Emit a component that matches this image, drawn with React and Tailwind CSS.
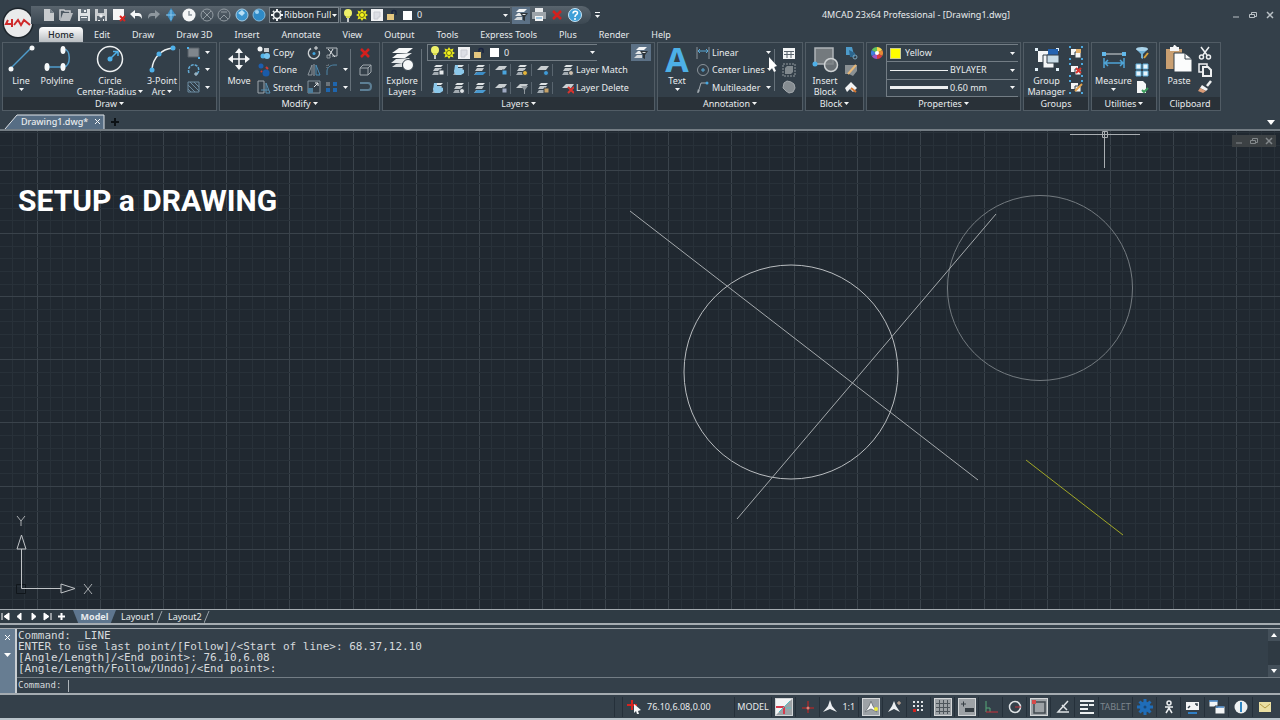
import React, { useState } from 'react';

/* ---------- small helpers ---------- */

const Svg = ({ s = 14, w, h, children, className = '' }) => (
    <svg
        width={w || s}
        height={h || s}
        viewBox={`0 0 ${w || s} ${h || s}`}
        fill="none"
        className={`shrink-0 ${className}`}
        aria-hidden="true"
    >
        {children}
    </svg>
);

const Caret = ({ className = '' }) => (
    <Svg w={5} h={3} className={className}>
        <path d="M0 0H5L2.5 3Z" fill="#f3f5f6" />
    </Svg>
);

const IconButton = ({ label, children, className = '' }) => (
    <button type="button" aria-label={label} className={`flex shrink-0 items-center justify-center ${className}`}>
        {children}
    </button>
);

/* ---------- 14px icons ---------- */

const icons = {
    newFile: (
        <Svg>
            <path d="M2 1H8L12 5V13H2Z" fill="#c9cccf" />
            <path d="M8 1V5H12Z" fill="#77818a" />
        </Svg>
    ),
    open: (
        <Svg>
            <path d="M1 12V2H5L6 3H11V5" stroke="#c9cccf" strokeWidth="1.5" />
            <path d="M1 13L4 5H14L11 13Z" fill="#b9bdc1" />
        </Svg>
    ),
    save: (
        <Svg>
            <path d="M1 1H13V13H1Z" fill="#dfe2e4" />
            <path d="M4 1H10V5H4ZM3 8H11V13H3Z" fill="#66717b" />
            <path d="M7 2H9V4H7ZM4 9H10V10H4Z" fill="#eef0f1" />
        </Svg>
    ),
    saveAs: (
        <Svg>
            <path d="M1 1H13V13H1Z" fill="#c9cdd0" />
            <path d="M4 1H10V5H4ZM3 8H11V13H3Z" fill="#5b6670" />
            <path d="M5 8L7 6L9 8L7 10ZM4 12H6V13H4ZM9 11H10V13H9Z" fill="#eef0f1" />
        </Svg>
    ),
    close: (
        <Svg>
            <path d="M1 1H12V12H1Z" fill="#f6f6f6" />
            <path d="M8 8L13 13M13 8L8 13" stroke="#d8231f" strokeWidth="2" />
        </Svg>
    ),
    undo: (
        <Svg>
            <path d="M1 6L6 2V5H9C12 5 13 7 13 11C12 9 11 8 9 8H6V11Z" fill="#f4f6f7" />
        </Svg>
    ),
    redo: (
        <Svg>
            <path d="M13 6L8 2V5H5C2 5 1 7 1 11C2 9 3 8 5 8H8V11Z" fill="#8e979e" />
        </Svg>
    ),
    pan: (
        <Svg>
            <path d="M7 0L11 6L7 14L3 7Z" fill="#3f8fc4" />
            <path d="M7 2V12M2 7H12" stroke="#89c6ec" />
        </Svg>
    ),
    disc: (
        <Svg>
            <circle cx="7" cy="7" r="6.5" fill="#f4f6f7" />
            <path d="M7 3V7H10" stroke="#8a959d" strokeWidth="1.5" />
        </Svg>
    ),
    orbit: (
        <Svg>
            <circle cx="7" cy="7" r="6" stroke="#929ba2" />
            <path d="M3 3L11 11M11 3L3 11" stroke="#929ba2" />
        </Svg>
    ),
    orbitHalf: (
        <Svg>
            <circle cx="7" cy="7" r="6" stroke="#929ba2" />
            <path d="M3 11L7 7L11 11M4 4H10" stroke="#929ba2" />
        </Svg>
    ),
    globe: (
        <Svg>
            <circle cx="7" cy="7" r="6" fill="#3b94cd" stroke="#a5cbe2" />
            <path d="M3 5L7 2L10 5L7 8Z" fill="#b9e0f6" />
        </Svg>
    ),
    sphere: (
        <Svg>
            <circle cx="7" cy="7" r="6" fill="#2f8ac6" stroke="#7fb6d8" />
            <circle cx="5" cy="4" r="2" fill="#9fd3f2" />
        </Svg>
    ),
    gear: (
        <Svg s={12}>
            <circle cx="6" cy="6" r="3.5" stroke="#f1f3f4" strokeWidth="1.5" />
            <path d="M6 0V2M6 10V12M0 6H2M10 6H12M2 2L3 3M9 9L10 10M2 10L3 9M9 3L10 2" stroke="#f1f3f4" strokeWidth="2" />
        </Svg>
    ),
    bulb: (
        <Svg w={10} h={13}>
            <circle cx="5" cy="4" r="4" fill="#eef06a" />
            <path d="M3 7H7V9H3Z" fill="#d6d84c" />
            <path d="M4 9H6V13H4Z" fill="#c4c8cb" />
        </Svg>
    ),
    sun: (
        <Svg s={12}>
            <path d="M6 0L7.5 2.5L10.5 1.5L9.5 4.5L12 6L9.5 7.5L10.5 10.5L7.5 9.5L6 12L4.5 9.5L1.5 10.5L2.5 7.5L0 6L2.5 4.5L1.5 1.5L4.5 2.5Z" fill="#e8e81c" />
            <circle cx="6" cy="6" r="2.5" fill="#f2f21c" stroke="#6c6d17" />
        </Svg>
    ),
    viewport: (
        <Svg s={12}>
            <path d="M0 0H12V12H0Z" fill="#f0f1f3" />
            <path d="M3 3H9V8H7V10H3Z" fill="#dddfe5" stroke="#c9cbd2" />
        </Svg>
    ),
    lock: (
        <Svg s={12}>
            <path d="M6 6V3C6 1 10 1 10 3V6" stroke="#1b2540" strokeWidth="1.5" />
            <path d="M1 5H8V11H1Z" fill="#e3c67f" />
        </Svg>
    ),
    layerSet: (
        <Svg>
            <path d="M5 1H13L10 4H2Z" fill="#f2f4f5" />
            <path d="M4 5H10L7 8H1Z" fill="#e3e6e8" />
            <path d="M3 9H8V12H0Z" fill="#d3d7da" />
            <path d="M6 5H14L11 9V13L9 12V9Z" fill="#2d3439" />
            <path d="M8 6H12L11 7H9Z" fill="#dfe3e6" />
        </Svg>
    ),
    print: (
        <Svg>
            <path d="M3 0H11V4H3Z" fill="#e8eaec" />
            <path d="M0 4H14V11H0Z" fill="#9da4aa" />
            <path d="M3 8H11V13H3Z" fill="#f4f5f6" />
            <path d="M4 10H10" stroke="#4c97c9" />
        </Svg>
    ),
    cross: (
        <Svg s={12}>
            <path d="M2 2L10 10M10 2L2 10" stroke="#d4201d" strokeWidth="2.5" />
        </Svg>
    ),
    help: (
        <Svg>
            <circle cx="7" cy="7" r="6.5" fill="#3f9fd8" stroke="#c9e4f4" />
            <path d="M5 5.5C5 2.5 9.5 2.5 9.5 5C9.5 7 7 6.5 7 9M7 10V12" stroke="#fff" strokeWidth="1.5" />
        </Svg>
    ),
    rectangle: (
        <Svg>
            <path d="M1 2H12V11H1Z" fill="#7f868c" stroke="#596168" />
            <path d="M0 1H2V3H0ZM11 11H13V13H11Z" fill="#4fb0e8" />
        </Svg>
    ),
    revision: (
        <Svg>
            <path d="M2 10C0 5 4 1 8 2C12 3 13 8 10 11" stroke="#62a9d3" strokeWidth="1.5" strokeDasharray="3 1" />
            <path d="M7 11H11M9 9V13" stroke="#b9d6e6" />
        </Svg>
    ),
    hatch: (
        <Svg>
            <path d="M1 2H12V12H1Z" stroke="#6d8ca1" />
            <path d="M1 5L8 12M1 9L4 12M3 2L12 11M7 2L12 7" stroke="#6d8ca1" />
        </Svg>
    ),
    copy: (
        <Svg>
            <circle cx="3" cy="3" r="2.5" fill="#f4f6f7" />
            <path d="M7 2H12V6H7Z" fill="#c7cbce" />
            <circle cx="6" cy="10" r="2.5" fill="#53b2e6" />
            <circle cx="10" cy="10" r="3" fill="#76c4ee" />
        </Svg>
    ),
    clone: (
        <Svg>
            <circle cx="4" cy="3" r="2.5" fill="#1d5fae" />
            <circle cx="9" cy="10" r="3.5" fill="#1a5ba9" />
            <path d="M9 4L11 6M4 8L5 9" stroke="#d03a34" strokeWidth="2" />
        </Svg>
    ),
    stretch: (
        <Svg>
            <path d="M1 1H7V13H1Z" stroke="#9fa7ad" />
            <path d="M9 3V13H13ZM4 10H12" stroke="#5791b5" />
        </Svg>
    ),
    rotate: (
        <Svg>
            <path d="M4 2.5A5.5 5.5 0 1 0 12 5" stroke="#cdd2d5" strokeWidth="1.5" />
            <path d="M7 2H11M9 0V4" stroke="#dfe3e5" />
            <circle cx="7" cy="7.5" r="1.5" fill="#3fa5e0" />
        </Svg>
    ),
    mirror: (
        <Svg>
            <path d="M5 2V12H1Z" stroke="#8d969d" />
            <path d="M9 2V12H13Z" stroke="#4d8fb8" />
            <path d="M7 1V13" stroke="#9aa3aa" />
        </Svg>
    ),
    scale: (
        <Svg>
            <path d="M1 1H13V13H1Z" stroke="#84929c" />
            <path d="M1 8H6V13H1Z" fill="#4d7d9b" />
            <path d="M7 7L11 3M8 3H11V6" stroke="#e4e7e9" />
        </Svg>
    ),
    trim: (
        <Svg>
            <path d="M1 2H12V10H7" stroke="#b6bdc2" />
            <path d="M3 3L10 11M8 3L4 10" stroke="#e4e7e9" />
            <path d="M2 9H5V12H2Z" stroke="#8d969d" />
        </Svg>
    ),
    fillet: (
        <Svg>
            <path d="M2 12V8C2 5 5 2 9 2H12" stroke="#4e86a8" />
            <path d="M2 5V2H5" stroke="#8d969d" strokeDasharray="1 1" />
        </Svg>
    ),
    array: (
        <Svg>
            <path d="M1 2H5V6H1Z" fill="#6b747b" />
            <path d="M8 2H12V6H8ZM1 8H5V12H1ZM8 8H12V12H8Z" fill="#1f66ae" />
        </Svg>
    ),
    box: (
        <Svg>
            <path d="M1 5H9V12H1ZM4 2H12V9M1 5L4 2M9 5L12 2M9 12L12 9" stroke="#a1a9af" />
        </Svg>
    ),
    join: (
        <Svg>
            <path d="M1 3H9C13 3 13 10 9 10H1" stroke="#5d7f95" strokeWidth="2" />
        </Svg>
    ),
    linear: (
        <Svg>
            <path d="M1 1V13M13 1V13" stroke="#8b949b" />
            <path d="M2 5H12M4 3L2 5L4 7M10 3L12 5L10 7" stroke="#5aa9d6" />
        </Svg>
    ),
    centerLines: (
        <Svg>
            <circle cx="7" cy="7" r="5.5" stroke="#8b949b" />
            <path d="M5 7H9M7 5V9" stroke="#5aa9d6" />
        </Svg>
    ),
    multileader: (
        <Svg>
            <path d="M2 13L5 3H10" stroke="#a3abb1" />
            <circle cx="11" cy="3" r="1.5" fill="#46a8e2" />
            <path d="M1 13L2 9L4 11Z" fill="#a3abb1" />
        </Svg>
    ),
    table: (
        <Svg>
            <path d="M1 2H13V13H1Z" fill="#f3f5f6" />
            <path d="M2 5.5H12M2 8.5H12M5 5V12M9 5V12" stroke="#58636d" />
        </Svg>
    ),
    wipeout: (
        <Svg>
            <path d="M1 1H13V13H1Z" stroke="#929a9f" strokeDasharray="2 1" />
            <path d="M3 5L5 3H11V9L9 11H3Z" fill="#81898e" />
        </Svg>
    ),
    cloud: (
        <Svg>
            <path d="M2 3L5 1L9 2L12 4L13 8L11 12L7 13L4 11L1 8Z" fill="#858c91" stroke="#a3a9ad" />
        </Svg>
    ),
    blockA: (
        <Svg>
            <path d="M2 1H8L10 9H2Z" fill="#4d9bca" />
            <path d="M5 4L11 7V11H6Z" fill="#2c668e" />
            <circle cx="11" cy="11" r="2" stroke="#7ba5bd" />
        </Svg>
    ),
    blockB: (
        <Svg>
            <path d="M1 2H13V8L9 13L5 11H1Z" fill="#8a9093" />
            <path d="M4 11L12 2" stroke="#e7b878" strokeWidth="2" />
        </Svg>
    ),
    blockC: (
        <Svg>
            <path d="M1 8L7 2L13 8L9 12L6 9L3 12Z" fill="#f2f3f4" />
            <path d="M7 8L12 12" stroke="#d57732" strokeWidth="2" />
        </Svg>
    ),
    wheel: (
        <Svg s={12}>
            <path d="M6 6V0A6 6 0 0 1 11.2 3Z" fill="#f7d64a" />
            <path d="M6 6L11.2 3A6 6 0 0 1 11.2 9Z" fill="#e78936" />
            <path d="M6 6L11.2 9A6 6 0 0 1 6 12Z" fill="#dc3a40" />
            <path d="M6 6V12A6 6 0 0 1 .8 9Z" fill="#9f54c4" />
            <path d="M6 6L.8 9A6 6 0 0 1 .8 3Z" fill="#3f7fe0" />
            <path d="M6 6L.8 3A6 6 0 0 1 6 0Z" fill="#63c35c" />
            <circle cx="6" cy="6" r="2" fill="#fff" />
        </Svg>
    ),
    filter: (
        <Svg>
            <path d="M1 3L13 3L8 8V13L6 12V8Z" fill="#6fb1d6" />
            <ellipse cx="7" cy="3" rx="6" ry="2" fill="#a9d3ea" />
            <path d="M9 12L13 7" stroke="#d8a23a" strokeWidth="2" />
        </Svg>
    ),
    tiles: (
        <Svg>
            <path d="M1 1H6V6H1ZM8 1H13V6H8ZM1 8H6V13H1ZM8 8H13V13H8Z" fill="#eaf5fb" stroke="#5fb0dc" />
        </Svg>
    ),
    check: (
        <Svg>
            <path d="M2 1H8L11 4V13H2Z" fill="#f4f5f6" />
            <path d="M7 10L9 12L13 8" stroke="#3c9c5c" strokeWidth="2" />
        </Svg>
    ),
    cut: (
        <Svg>
            <path d="M3 1L9 9M11 1L5 9" stroke="#eef0f1" strokeWidth="1.5" />
            <circle cx="3.5" cy="11" r="2" stroke="#eef0f1" strokeWidth="1.5" />
            <circle cx="10.5" cy="11" r="2" stroke="#eef0f1" strokeWidth="1.5" />
        </Svg>
    ),
    copyClip: (
        <Svg>
            <path d="M4 9H1V1H9V3" stroke="#eef0f1" strokeWidth="1.5" />
            <path d="M5 4H10L13 7V13H5Z" stroke="#eef0f1" strokeWidth="2" />
        </Svg>
    ),
    brush: (
        <Svg>
            <path d="M9 6L13 1" stroke="#eef0f1" strokeWidth="2.5" />
            <path d="M4 5L10 9L8 11L2 8Z" fill="#f3f4f5" />
            <path d="M2 8L8 11L5 13L0 11Z" fill="#d89a76" />
        </Svg>
    ),
};

const layerMarks = {
    square: (c) => <path d="M7 6H12V11H7Z" fill={c} stroke="#333f49" />,
    dot: (c) => <circle cx="9" cy="9" r="2.5" fill={c} stroke="#333f49" />,
    funnel: (c) => <path d="M5 4H12L9 8V12H8V8Z" fill={c} />,
    cross: (c) => <path d="M6 5L12 11M12 5L6 11" stroke={c} strokeWidth="2" />,
    plane: (c) => <path d="M3 8H12L9 11H0Z" fill={c} />,
    person: (c) => <path d="M2 1H5V4H7L11 6V9L8 11H3L1 8Z" fill={c} />,
};

const LayerIcon = ({ color, mark, thin }) => (
    <Svg s={12}>
        {thin ? (
            <path d="M4 2H12L9 6H0Z" fill="#c9ced1" />
        ) : (
            <g>
                <path d="M4 1H11L9 3H2Z" fill="#dfe3e5" />
                <path d="M3 4H10L8 7H1Z" fill="#c2c8cc" />
                <path d="M2 8H9L7 11H0Z" fill="#a3abb1" />
            </g>
        )}
        {layerMarks[mark](color)}
    </Svg>
);

const GroupIcon = ({ mark = 'square' }) => (
    <Svg>
        <path d="M0 0H2V2H0ZM12 0H14V2H12ZM0 12H2V14H0ZM12 12H14V14H12Z" fill="#4da8de" />
        <path d="M2 3H9V9H2Z" fill="#f4f5f6" />
        <path d="M6 6H12V12H6Z" fill="#f4f5f6" stroke="#36424c" />
        {mark === 'square' && <path d="M7 3H12V7H7Z" fill="#e2b06a" />}
        {mark === 'cross' && <path d="M7 5L12 10M12 5L7 10" stroke="#d8342e" strokeWidth="2" />}
        {mark === 'pencil' && <path d="M6 11L13 4" stroke="#e2a24c" strokeWidth="2" />}
    </Svg>
);

/* ---------- ribbon blocks ---------- */

const Panel = ({ title, caret = true, className = '', children }) => (
    <section className={`flex shrink-0 flex-col border border-[#515c65] bg-[#333f49] ${className}`}>
        <div className="flex flex-1 items-stretch">{children}</div>
        <button type="button" className="flex h-[13px] items-center justify-center gap-[2px] bg-[#293138] text-[9px] leading-3">
            {title}
            {caret && <Caret />}
        </button>
    </section>
);

const BigButton = ({ icon, label, label2, caret, caretBelow, className = '' }) => (
    <button type="button" className={`flex shrink-0 flex-col items-center pt-[2px] text-[9px] leading-[11px] ${className}`}>
        <span className="flex h-7 items-center justify-center">{icon}</span>
        <span className="mt-[2px] whitespace-nowrap">{label}</span>
        {label2 && (
            <span className="flex items-center gap-[2px] whitespace-nowrap">
                {label2}
                {caret && <Caret />}
            </span>
        )}
        {caretBelow && <Caret className="mt-[2px]" />}
    </button>
);

const Column = ({ children, className = '' }) => (
    <div className={`flex shrink-0 flex-col justify-around py-[1px] ${className}`}>{children}</div>
);

const Divider = () => <span className="my-[6px] w-px shrink-0 bg-[#66717a]" />;

const SmallButton = ({ icon, label, caret, className = '' }) => (
    <button type="button" className={`flex h-4 items-center gap-[2px] whitespace-nowrap text-[9px] ${className}`}>
        {icon}
        <span>{label}</span>
        {caret && <Caret className="ml-auto" />}
    </button>
);

const IconCaret = ({ label, icon, caret = true }) => (
    <IconButton label={label} className="h-4 w-6 !justify-start gap-[4px]">
        {icon}
        {caret && <Caret />}
    </IconButton>
);

const LayerCombo = ({ label, className = '' }) => (
    <label className={`flex items-center gap-[3px] border border-[#737d85] px-[2px] ${className}`}>
        {icons.bulb}
        {icons.sun}
        {icons.viewport}
        {icons.lock}
        <span className="ml-[2px] size-[9px] shrink-0 bg-white" />
        <select aria-label={label} className="ml-[2px] min-w-0 flex-1 appearance-none bg-transparent text-[9px] leading-3 outline-none">
            <option>0</option>
        </select>
        <Caret />
    </label>
);

const LineIcon = (
    <Svg s={28}>
        <path d="M4 23L24 3" stroke="#4f9ccb" strokeWidth="1.5" />
        <circle cx="4" cy="24" r="2.5" fill="#f6f8f9" />
        <circle cx="25" cy="3" r="2.5" fill="#f6f8f9" />
    </Svg>
);

const PolylineIcon = (
    <Svg s={28}>
        <path d="M6 22H18M21 4C28 5 28 20 21 22" stroke="#4f9ccb" strokeWidth="1.5" />
        <ellipse cx="4" cy="22" rx="2.5" ry="4" fill="#f6f8f9" />
        <ellipse cx="20" cy="22" rx="2.5" ry="4" fill="#f6f8f9" />
        <ellipse cx="20" cy="5" rx="2.5" ry="4" fill="#f6f8f9" />
    </Svg>
);

const CircleIcon = (
    <Svg s={28}>
        <circle cx="14" cy="14" r="12.5" stroke="#eef1f2" strokeWidth="1.5" />
        <path d="M14 14L21 7M17 6.5H22V11" stroke="#4fb0e8" strokeWidth="1.5" />
        <circle cx="14" cy="14" r="2.5" fill="#4fb0e8" />
    </Svg>
);

const ArcIcon = (
    <Svg s={28}>
        <path d="M4 24C5 13 13 4 25 3" stroke="#eef1f2" strokeWidth="1.5" />
        <circle cx="4" cy="25" r="2.5" fill="#4fb0e8" />
        <circle cx="11" cy="9" r="2.5" fill="#4fb0e8" />
        <circle cx="25" cy="3" r="2.5" fill="#4fb0e8" />
    </Svg>
);

const MoveIcon = (
    <Svg s={24}>
        <path d="M12 4V20M4 12H20" stroke="#f6f8f9" strokeWidth="1.5" />
        <path d="M12 1L16 6H8ZM12 23L8 18H16ZM1 12L6 8V16ZM23 12L18 16V8Z" fill="#f6f8f9" />
    </Svg>
);

const ExploreIcon = (
    <Svg s={24}>
        <path d="M9 1H23L17 6H2Z" fill="#f6f8f9" />
        <path d="M7 7L2 11H15L22 6" fill="#f6f8f9" />
        <path d="M6 12L1 16H14L20 11" fill="#e6e9eb" />
        <path d="M6 17L2 20H12V16" fill="#d6dadd" />
        <circle cx="18" cy="18" r="5.5" fill="#f6f8f9" stroke="#333f49" />
    </Svg>
);

const InsertBlockIcon = (
    <Svg s={28}>
        <path d="M4 3H22V19H4Z" fill="#747a7e" stroke="#aeb4b8" strokeWidth="1.5" />
        <circle cx="20" cy="20" r="6.5" fill="#777d81" fillOpacity=".8" stroke="#ced2d4" strokeWidth="1.5" />
        <circle cx="4" cy="19" r="2.5" fill="#4fb0e8" />
    </Svg>
);

const GroupManagerIcon = (
    <Svg s={26}>
        <path d="M1 2H4V5H1ZM22 2H25V5H22ZM1 22H4V25H1ZM22 22H25V25H22Z" fill="#e4f2fa" />
        <path d="M4 5H16V16H4Z" fill="#f4f6f7" />
        <path d="M9 9H20V22H9Z" fill="#f4f6f7" stroke="#333f49" />
        <path d="M14 3H24V10H14Z" fill="#2463b1" />
        <path d="M13 9H25V17H13Z" fill="#c8dbe6" stroke="#333f49" />
    </Svg>
);

const MeasureIcon = (
    <Svg s={24}>
        <path d="M2 7H22" stroke="#d9dee1" />
        <path d="M3 16H21M2 11V21M22 11V21M6 13L3 16L6 19M18 13L21 16L18 19" stroke="#4fa4d6" strokeWidth="1.5" />
        <path d="M0 5H4V9H0ZM20 5H24V9H20Z" fill="#62b8ea" />
    </Svg>
);

const PasteIcon = (
    <Svg s={28}>
        <path d="M1 4H17V24H1Z" fill="#c99f71" />
        <path d="M5 2H8L9 0H10L12 2H14V6H5Z" fill="#f4f5f6" />
        <path d="M9 8H20L27 14V27H9Z" fill="#fbfcfc" stroke="#333f49" />
        <path d="M20 8V14H27" stroke="#333f49" />
    </Svg>
);

const layerTools = [
    [
        { name: 'Layer freeze', color: '#e6e9eb', mark: 'square' },
        { name: 'Layer merge', color: '#8cc8ea', mark: 'person' },
        { name: 'Layer walk', color: '#3c8dc6', mark: 'plane' },
        { name: 'Layer lock', color: '#4aa5de', mark: 'square', thin: true },
        { name: 'Layer on', color: '#e5b53a', mark: 'dot' },
        { name: 'Layer isolate', color: '#3f9bd8', mark: 'dot', thin: true },
    ],
    [
        { name: 'Make current', color: '#8cc8ea', mark: 'person' },
        { name: 'Layer off', color: '#dfe3e6', mark: 'dot' },
        { name: 'Layer thaw', color: '#4a9ad0', mark: 'plane' },
        { name: 'Layer unlock', color: '#9fa9c2', mark: 'square', thin: true },
        { name: 'Layer filter', color: '#8e969c', mark: 'funnel', thin: true },
        { name: 'Layer previous', color: '#c6a268', mark: 'square' },
    ],
];

const LayerRow = ({ tools, label, icon }) => (
    <div className="flex h-[18px] items-center">
        {tools.map((t) => (
            <React.Fragment key={t.name}>
                <IconButton label={t.name} className="w-[21px]">
                    <LayerIcon {...t} />
                </IconButton>
                <span className="-ml-px h-3 w-px shrink-0 bg-[#59656f]" />
            </React.Fragment>
        ))}
        <SmallButton icon={icon} label={label} className="ml-[9px]" />
    </div>
);

const PropertyCombo = ({ label, value, swatch, line }) => (
    <label className="flex flex-1 items-center gap-[2px] border-b border-l border-[#737d85] px-[3px] first:border-t">
        {swatch && <span className="mr-[2px] size-[11px] shrink-0 border border-[#cfcf8f] bg-[#ffff00]" />}
        {line && <span className={`w-[58px] shrink-0 bg-[#eef0f1] ${line}`} />}
        <select aria-label={label} className="min-w-0 flex-1 appearance-none bg-transparent text-[9px] leading-3 outline-none">
            <option>{value}</option>
        </select>
        <Caret />
    </label>
);

const Ribbon = () => (
    <div className="flex h-[69px] gap-[2px] pl-[2px]">
        <Panel title="Draw" className="w-[215px]">
            <BigButton icon={LineIcon} label="Line" caretBelow className="w-9" />
            <BigButton icon={PolylineIcon} label="Polyline" className="w-9" />
            <BigButton icon={CircleIcon} label="Circle" label2="Center-Radius" caret className="w-[70px]" />
            <BigButton icon={ArcIcon} label="3-Point" label2="Arc" caret className="w-[34px]" />
            <Divider />
            <Column className="ml-[7px]">
                <IconCaret label="Rectangle" icon={icons.rectangle} />
                <IconCaret label="Revision cloud" icon={icons.revision} />
                <IconCaret label="Hatch" icon={icons.hatch} />
            </Column>
        </Panel>

        <Panel title="Modify" className="w-[161px]">
            <BigButton icon={MoveIcon} label="Move" className="ml-[1px] w-9" />
            <Column className="w-[50px]">
                <SmallButton icon={icons.copy} label="Copy" />
                <SmallButton icon={icons.clone} label="Clone" />
                <SmallButton icon={icons.stretch} label="Stretch" />
            </Column>
            <Column className="w-[18px]">
                <IconCaret label="Rotate" icon={icons.rotate} caret={false} />
                <IconCaret label="Mirror" icon={icons.mirror} caret={false} />
                <IconCaret label="Scale" icon={icons.scale} caret={false} />
            </Column>
            <Column className="w-[25px]">
                <IconCaret label="Trim" icon={icons.trim} caret={false} />
                <IconCaret label="Fillet" icon={icons.fillet} />
                <IconCaret label="Array" icon={icons.array} />
            </Column>
            <Divider />
            <Column className="ml-2 w-4">
                <IconCaret label="Erase" icon={icons.cross} caret={false} />
                <IconCaret label="Explode" icon={icons.box} caret={false} />
                <IconCaret label="Join" icon={icons.join} caret={false} />
            </Column>
        </Panel>

        <Panel title="Layers" className="w-[273px]">
            <BigButton icon={ExploreIcon} label="Explore" label2="Layers" className="w-[38px]" />
            <Divider />
            <div className="ml-[5px] flex flex-1 flex-col">
                <div className="flex h-[18px] items-start justify-between pr-[3px]">
                    <LayerCombo label="Current layer" className="mt-px h-[17px] w-[170px] border-r-0" />
                    <IconButton label="Layer states" className="mt-px h-[17px] w-5 bg-[#5c7186]">
                        {icons.layerSet}
                    </IconButton>
                </div>
                <LayerRow tools={layerTools[0]} label="Layer Match" icon={<LayerIcon color="#cdbfae" mark="dot" />} />
                <LayerRow tools={layerTools[1]} label="Layer Delete" icon={<LayerIcon color="#d8342e" mark="cross" thin />} />
            </div>
        </Panel>

        <Panel title="Annotation" className="w-[146px]">
            <BigButton
                icon={<span className="font-['Open_Sans',sans-serif] text-[34px] font-bold leading-7 text-[#4db0e6]">A</span>}
                label="Text"
                caretBelow
                className="w-[38px]"
            />
            <Column className="w-[75px]">
                <SmallButton icon={icons.linear} label="Linear" caret />
                <SmallButton icon={icons.centerLines} label="Center Lines" caret />
                <SmallButton icon={icons.multileader} label="Multileader" caret />
            </Column>
            <span className="w-[3px]" />
            <Divider />
            <Column className="ml-[7px] w-[18px]">
                <IconCaret label="Table" icon={icons.table} caret={false} />
                <IconCaret label="Wipeout" icon={icons.wipeout} caret={false} />
                <IconCaret label="Cloud" icon={icons.cloud} caret={false} />
            </Column>
        </Panel>

        <Panel title="Block" className="w-[59px]">
            <BigButton icon={InsertBlockIcon} label="Insert" label2="Block" className="w-[38px]" />
            <Column className="w-[18px]">
                <IconCaret label="Create block" icon={icons.blockA} caret={false} />
                <IconCaret label="Edit block" icon={icons.blockB} caret={false} />
                <IconCaret label="Edit attributes" icon={icons.blockC} caret={false} />
            </Column>
        </Panel>

        <Panel title="Properties" className="w-[155px]">
            <div className="flex w-[19px] shrink-0 justify-center pt-[4px]">{icons.wheel}</div>
            <div className="mt-px flex flex-1 flex-col pr-[2px]">
                <PropertyCombo label="Color" value="Yellow" swatch />
                <PropertyCombo label="Linetype" value="BYLAYER" line="h-px" />
                <PropertyCombo label="Lineweight" value="0.60 mm" line="h-[3px]" />
            </div>
        </Panel>

        <Panel title="Groups" caret={false} className="w-[66px]">
            <BigButton icon={GroupManagerIcon} label="Group" label2="Manager" className="w-[45px]" />
            <Column className="w-[18px]">
                <IconCaret label="Group" icon={<GroupIcon />} caret={false} />
                <IconCaret label="Ungroup" icon={<GroupIcon mark="cross" />} caret={false} />
                <IconCaret label="Edit group" icon={<GroupIcon mark="pencil" />} caret={false} />
            </Column>
        </Panel>

        <Panel title="Utilities" className="w-[66px]">
            <BigButton icon={MeasureIcon} label="Measure" caretBelow className="w-[43px]" />
            <Column className="w-[18px]">
                <IconCaret label="Quick select" icon={icons.filter} caret={false} />
                <IconCaret label="Calculator" icon={icons.tiles} caret={false} />
                <IconCaret label="Audit" icon={icons.check} caret={false} />
            </Column>
        </Panel>

        <Panel title="Clipboard" caret={false} className="w-[62px]">
            <BigButton icon={PasteIcon} label="Paste" className="w-[38px]" />
            <Column className="w-5">
                <IconCaret label="Cut" icon={icons.cut} caret={false} />
                <IconCaret label="Copy to clipboard" icon={icons.copyClip} caret={false} />
                <IconCaret label="Match properties" icon={icons.brush} caret={false} />
            </Column>
        </Panel>
    </div>
);

/* ---------- title bar ---------- */

const quickTools = [
    ['New', 'newFile'],
    ['Open', 'open'],
    ['Save', 'save'],
    ['Save as', 'saveAs'],
    ['Close drawing', 'close'],
    ['Undo', 'undo'],
    ['Redo', 'redo'],
    ['Pan', 'pan'],
    ['Zoom', 'disc'],
    ['Orbit', 'orbit'],
    ['Free orbit', 'orbitHalf'],
    ['Visual styles', 'globe'],
    ['Render', 'sphere'],
];

const menuTabs = ['Home', 'Edit', 'Draw', 'Draw 3D', 'Insert', 'Annotate', 'View', 'Output', 'Tools', 'Express Tools', 'Plus', 'Render', 'Help'];

const WindowButtons = ({ color, className }) => (
    <div className={`flex items-center ${className}`}>
        <IconButton label="Minimize">
            <Svg s={8}><path d="M1 6H7" stroke={color} /></Svg>
        </IconButton>
        <IconButton label="Restore">
            <Svg s={8}><path d="M.5 3.5H5.5V6.5H.5ZM2.5 3V1.5H7.5V5.5H6" stroke={color} /></Svg>
        </IconButton>
        <IconButton label="Close">
            <Svg s={8}><path d="M1 1L7 7M7 1L1 7" stroke={color} strokeWidth="1.5" /></Svg>
        </IconButton>
    </div>
);

const Header = ({ tab, setTab }) => (
    <header className="flex h-[42px]">
        <div className="flex w-[39px] shrink-0 items-center justify-center pt-[3px] pr-[3px]">
            <button type="button" aria-label="Application menu">
                <Svg s={32}>
                    <circle cx="16" cy="16" r="15.5" fill="#1d252c" />
                    <circle cx="16" cy="16" r="14" fill="#e9eaeb" />
                    <path d="M6 13L4 17H10M10 12V20M12 18L16 13L19 18L22 13L28 18" stroke="#cf2a2b" strokeWidth="2" />
                </Svg>
            </button>
        </div>
        <div className="flex min-w-0 flex-1 flex-col">
            <div className="flex h-[27px] items-center pt-[3px]">
                <div className="-ml-2 flex h-[18px] shrink-0 items-center rounded-r-full bg-linear-to-b from-[#59646d] to-[#3c4852] pl-[9px] pr-[7px]">
                    <div className="flex w-[228px] items-center justify-around">
                        {quickTools.map(([name, icon]) => (
                            <IconButton key={name} label={name}>
                                {icons[icon]}
                            </IconButton>
                        ))}
                    </div>
                    <label className="ml-[1px] flex h-4 w-[70px] items-center gap-[1px] border border-[#79838b] bg-[#2c363f] px-[1px]">
                        {icons.gear}
                        <select aria-label="Workspace" className="min-w-0 flex-1 appearance-none bg-transparent text-[9px] leading-3 outline-none">
                            <option>Ribbon Full</option>
                        </select>
                        <Caret />
                    </label>
                    <LayerCombo label="Layer" className="ml-[1px] h-4 w-[170px] border-r-0 bg-[#333f49]" />
                    <IconButton label="Layer manager" className="ml-[2px] h-[17px] w-[18px] bg-[#5c7186]">{icons.layerSet}</IconButton>
                    <IconButton label="Print" className="w-[18px]">{icons.print}</IconButton>
                    <IconButton label="Delete" className="w-[18px]">{icons.cross}</IconButton>
                    <IconButton label="Help topics" className="w-[18px]">{icons.help}</IconButton>
                </div>
                <IconButton label="Customize toolbar" className="ml-[4px]">
                    <Svg w={5} h={6}>
                        <path d="M0 .5H5" stroke="#f3f5f6" />
                        <path d="M0 3H5L2.5 6Z" fill="#f3f5f6" />
                    </Svg>
                </IconButton>
                <h1 className="flex-1 truncate text-center text-[9px]">4MCAD 23x64 Professional - [Drawing1.dwg]</h1>
                <WindowButtons color="#b9c0c5" className="gap-[9px] pr-[6px]" />
            </div>
            <nav className="flex h-[15px] items-stretch" aria-label="Ribbon tabs">
                {menuTabs.map((name) => (
                    <button
                        key={name}
                        type="button"
                        onClick={() => setTab(name)}
                        className={`shrink-0 whitespace-nowrap text-[9px] leading-[14px] ${
                            tab === name
                                ? 'rounded-t-sm bg-linear-to-b from-white to-[#b9bec2] px-[9px] font-medium text-[#20272d]'
                                : 'px-[11px]'
                        }`}
                    >
                        {name}
                    </button>
                ))}
            </nav>
        </div>
    </header>
);

const DocumentTabs = () => (
    <div className="flex h-5 items-end border-b-2 border-[#737c83]">
        <div className="relative ml-1 flex h-[15px] w-[101px] shrink-0 items-center">
            <svg className="absolute inset-0 h-full w-full" viewBox="0 0 101 15" preserveAspectRatio="none" fill="none" aria-hidden="true">
                <path d="M1 15L13 1H100V15" fill="#566d84" stroke="#dfe4e8" />
            </svg>
            <button type="button" className="relative ml-[17px] text-[9px] font-medium leading-3">Drawing1.dwg*</button>
            <IconButton label="Close tab" className="relative ml-auto mr-1">
                <Svg s={7}><path d="M1 1L6 6M6 1L1 6" stroke="#f4f6f7" /></Svg>
            </IconButton>
        </div>
        <IconButton label="New tab" className="mb-[3px] ml-[6px]">
            <Svg s={8}><path d="M4 0V8M0 4H8" stroke="#0c1115" strokeWidth="2" /></Svg>
        </IconButton>
        <IconButton label="Tab list" className="mb-[4px] ml-auto mr-[5px]">
            <Svg w={8} h={5}><path d="M0 0H8L4 5Z" fill="#fff" /></Svg>
        </IconButton>
    </div>
);

/* ---------- drawing area ---------- */

const STEP = 63.1;
const cols = Array.from({ length: 200 }, (_, i) => ({ at: 37 + (i - 5) * (STEP / 5), major: i % 5 === 0 }));
const rows = Array.from({ length: 120 }, (_, i) => ({ at: 39 + (i - 5) * (STEP / 5), major: i % 5 === 0 }));

const Canvas = () => (
    <main className="relative min-h-0 flex-1 overflow-hidden bg-[#202830]">
        <svg className="block h-full w-full" fill="none" aria-label="Drawing1">
            {cols.map((c, i) => (
                <line key={`c${i}`} x1={Math.round(c.at) + 0.5} x2={Math.round(c.at) + 0.5} y1="0" y2="100%" stroke={c.major ? '#3a434b' : '#283139'} />
            ))}
            {rows.map((r, i) => (
                <line key={`r${i}`} y1={Math.round(r.at) + 0.5} y2={Math.round(r.at) + 0.5} x1="0" x2="100%" stroke={r.major ? '#3a434b' : '#283139'} />
            ))}

            <circle cx="791" cy="241" r="107" stroke="#b9bdc0" />
            <circle cx="1040" cy="157" r="92.5" stroke="#747b80" />
            <path d="M630 80L978 349" stroke="#a4a9ac" />
            <path d="M996 83L737 388" stroke="#a4a9ac" />
            <path d="M1026 329L1123 404" stroke="#a2a827" />

            {/* crosshair */}
            <path d="M1070 3.5H1140M1104.5 0V37" stroke="#a9aeb2" />
            <path d="M1102.5 .5H1107.5V6.5H1102.5Z" stroke="#a9aeb2" />

            {/* UCS axes */}
            <path d="M16.5 453.5H25.5V462.5H16.5Z" stroke="#10161b" />
            <path d="M21.5 418V457.5H61M21.5 404L17 418H26ZM75 457.5L61 453V462Z" stroke="#c0c4c7" />
            <path d="M17 385L21 390L25 385M21 390V395M84 453L92 463M92 453L84 463" stroke="#a9adb0" />
        </svg>

        <h2 className="absolute left-[18px] top-[52px] whitespace-nowrap font-['Roboto',sans-serif] text-[30px] font-bold leading-9 text-white">
            SETUP a DRAWING
        </h2>
        <div className="absolute right-1 top-1 bg-[#3c4144]">
            <WindowButtons color="#83888b" className="h-3 w-11 justify-around" />
        </div>
    </main>
);

/* ---------- bottom area ---------- */

const sheetNav = [
    ['First layout', 'M1 1V8M8 1V8L3 4.5Z'],
    ['Previous layout', 'M6 1V8L2 4.5Z'],
    ['Next layout', 'M3 1V8L7 4.5Z'],
    ['Last layout', 'M8 1V8M1 1V8L6 4.5Z'],
    ['Add layout', 'M4.5 1V8M1 4.5H8'],
];

const LayoutTabs = () => (
    <div className="flex h-4 items-stretch border-b-2 border-t border-[#a5acb1] bg-[#2f3b44]">
        <div className="flex w-[73px] items-center gap-[5px] pl-[1px]">
            {sheetNav.map(([name, d]) => (
                <IconButton key={name} label={name}>
                    <Svg s={9}><path d={d} stroke="#fff" fill="#fff" strokeWidth={name === 'Add layout' ? 2 : 1} /></Svg>
                </IconButton>
            ))}
        </div>
        <button type="button" className="w-[43px] bg-[#5e768e] text-[9px] font-bold leading-3 [clip-path:polygon(0_0,100%_0,88%_100%,12%_100%)]">
            Model
        </button>
        {['Layout1', 'Layout2'].map((name) => (
            <button key={name} type="button" className="flex w-[47px] items-center justify-between pl-[5px] text-[9px] leading-3">
                {name}
                <Svg w={6} h={12}><path d="M0 12L5 0" stroke="#9aa2a8" /></Svg>
            </button>
        ))}
    </div>
);

const log = [
    'Command: _LINE',
    'ENTER to use last point/[Follow]/<Start of line>: 68.37,12.10',
    '[Angle/Length]/<End point>: 76.10,6.08',
    '[Angle/Length/Follow/Undo]/<End point>:',
];

const CommandLine = () => (
    <div className="mt-[3px] flex h-[67px] border-b-2 border-t border-[#a5acb1] font-['DejaVu_Sans_Mono',monospace]">
        <div className="flex w-[15px] shrink-0 flex-col items-center gap-3 bg-[#677d92] pt-[5px]">
            <IconButton label="Close command line">
                <Svg s={7}><path d="M1 1L6 6M6 1L1 6" stroke="#fff" /></Svg>
            </IconButton>
            <IconButton label="Command options">
                <Svg w={7} h={4}><path d="M0 0H7L3.5 4Z" fill="#fff" /></Svg>
            </IconButton>
        </div>
        <div className="flex min-w-0 flex-1 flex-col border-l-2 border-[#c9ced2]">
            <div className="flex flex-1">
                <div className="flex-1 pl-px pt-px text-[11px] leading-[11px] text-[#d6dadd]">
                    {log.map((line) => (
                        <p key={line} className="whitespace-pre">{line}</p>
                    ))}
                </div>
                <div className="flex w-3 flex-col justify-between bg-[#2f3a43]">
                    <IconButton label="Scroll up" className="h-3 bg-[#44505a]">
                        <Svg w={6} h={4}><path d="M0 4H6L3 0Z" fill="#fff" /></Svg>
                    </IconButton>
                    <IconButton label="Scroll down" className="h-3 bg-[#44505a]">
                        <Svg w={6} h={4}><path d="M0 0H6L3 4Z" fill="#fff" /></Svg>
                    </IconButton>
                </div>
            </div>
            <label className="flex h-4 items-center border-t border-[#737d85] pl-px text-[9px] text-[#d6dadd]">
                Command:
                <input type="text" className="ml-[7px] h-3 min-w-0 flex-1 border-l border-[#aeb5ba] bg-transparent outline-none" />
            </label>
        </div>
    </div>
);

const Cell = ({ label, active, children, className = 'w-6' }) => (
    <button type="button" aria-label={label} className={`flex h-5 shrink-0 items-center justify-center border-l border-[#25303a] ${className}`}>
        <span className={`flex size-[18px] items-center justify-center ${active ? 'border border-[#d3d6d8] bg-[#9da2a6]' : ''}`}>{children}</span>
    </button>
);

const StatusBar = () => (
    <footer className="flex h-[25px] items-center justify-end border-b-2 border-[#b9c4cb] pr-1 pt-px text-[9px]">
        <span className="mr-[7px] h-5 w-px bg-[#25303a]" />
        <div className="flex h-5 w-28 items-center gap-[6px] border-l border-[#25303a] pl-1">
            <Svg s={14}>
                <path d="M5 0V10M0 5H10" stroke="#d5231f" strokeWidth="2" />
                <path d="M7 4L14 10L11 11L12 14L10 14L9 11L7 13Z" fill="#f4f6f7" />
            </Svg>
            <output>76.10,6.08,0.00</output>
        </div>
        <button type="button" className="h-5 w-[37px] border-l border-[#25303a]">MODEL</button>
        <Cell label="Drafting preview" active>
            <Svg s={16}>
                <path d="M0 0H16L0 16Z" fill="#f2f4f5" />
                <path d="M0 8H8M8 8V15" stroke="#d53b4d" strokeWidth="2" />
                <path d="M3 13L14 2M10 9H15" stroke="#55c2c4" />
            </Svg>
        </Cell>
        <Cell label="Snap tracking">
            <Svg><path d="M7 1V13M1 8H13" stroke="#d5231f" /><circle cx="7" cy="8" r="1.5" fill="#d9857b" /></Svg>
        </Cell>
        <button type="button" className="flex h-5 w-[39px] items-center justify-around border-l border-[#25303a]">
            <Svg><path d="M7 0L9 6L14 12L7 9L0 12L5 6Z" fill="#eceff1" /></Svg>
            1:1
        </button>
        <Cell label="Annotation visibility" active>
            <Svg>
                <path d="M7 1L9 6L13 12L7 9L1 12L5 6Z" fill="#f7f8f8" stroke="#767c80" />
                <circle cx="12" cy="9" r="2" fill="#eeea3c" />
            </Svg>
        </Cell>
        <Cell label="Annotation autoscale">
            <Svg>
                <path d="M6 1L8 6L12 12L6 9L0 12L4 6Z" fill="#eceff1" />
                <path d="M11 1V5M9 3H13" stroke="#d8b9a2" />
            </Svg>
        </Cell>
        <Cell label="Snap">
            <Svg>
                {[1, 5, 9].map((y) => (
                    <path key={y} d={`M1 ${y}H3V${y + 2}H1ZM5 ${y}H7V${y + 2}H5ZM9 ${y}H11V${y + 2}H9Z`} fill="#dfe3e6" />
                ))}
                <path d="M1 9H4V12H1Z" fill="#d5231f" />
            </Svg>
        </Cell>
        <Cell label="Grid" active>
            <Svg><path d="M0 3.5H14M0 7.5H14M0 11.5H14M3.5 0V14M7.5 0V14M11.5 0V14" stroke="#4d555b" /></Svg>
        </Cell>
        <Cell label="Dynamic input" active>
            <Svg>
                <path d="M1 4H6M3.5 1.5V6.5" stroke="#353d43" />
                <path d="M5 8H14V12H5Z" fill="#353d43" />
            </Svg>
        </Cell>
        <Cell label="Ortho">
            <Svg><path d="M2 1V12M2 8H6V12" stroke="#57a878" /><path d="M2 12H14" stroke="#c9303a" /></Svg>
        </Cell>
        <Cell label="Polar">
            <Svg><circle cx="7" cy="7" r="5.5" stroke="#dfe3e6" strokeWidth="1.5" /><path d="M7 7H13" stroke="#c9303a" /></Svg>
        </Cell>
        <Cell label="Object snap" active>
            <Svg><path d="M2 2H13V13H2Z" stroke="#424a50" strokeWidth="1.5" /><path d="M0 0H4V4H0Z" fill="#d64a4a" /></Svg>
        </Cell>
        <Cell label="Object tracking">
            <Svg><path d="M12 1L2 12H13M6 5L11 10" stroke="#dfe3e6" strokeWidth="1.5" /></Svg>
        </Cell>
        <Cell label="Lineweight display">
            <Svg s={16}><path d="M1 2H15M1 6H9M10 6H15M1 10H9M1 14H15" stroke="#eceff1" strokeWidth="2" /></Svg>
        </Cell>
        <button type="button" className="h-5 w-[34px] border-l border-[#25303a] text-[#7d868d]">TABLET</button>
        <Cell label="Settings">
            <Svg s={16}>
                <circle cx="8" cy="8" r="5" fill="#1f6db8" stroke="#1f6db8" />
                <path d="M8 0V16M0 8H16M2.5 2.5L13.5 13.5M13.5 2.5L2.5 13.5" stroke="#1f6db8" strokeWidth="3" />
                <circle cx="8" cy="8" r="1.5" fill="#17487a" />
            </Svg>
        </Cell>
        <Cell label="Tracking">
            <Svg>
                <circle cx="7" cy="3" r="2" stroke="#eceff1" strokeWidth="1.5" />
                <path d="M3 7H11M7 7V10M4 13L7 8L10 13" stroke="#eceff1" strokeWidth="1.5" />
            </Svg>
        </Cell>
        <Cell label="Clean screen">
            <Svg>
                <path d="M0 2H13V10H0Z" fill="#f2f4f5" />
                <path d="M2 8L4 6M9 4H11V6" stroke="#333f49" strokeWidth="1.5" />
                <path d="M2 13H11" stroke="#2f7fc6" strokeWidth="2" />
            </Svg>
        </Cell>
        <Cell label="Windows">
            <Svg s={16}>
                <path d="M0 1H9V8H0ZM6 7H16V15H6Z" fill="#f2f4f5" stroke="#333f49" />
                <path d="M0 2H9M7 8H15" stroke="#3f7fc0" strokeWidth="1.5" />
            </Svg>
        </Cell>
        <Cell label="Information">
            <Svg><circle cx="7" cy="7" r="6.5" fill="#eef1f2" /><path d="M7 2V12" stroke="#2f86c2" strokeWidth="2" /></Svg>
        </Cell>
        <Cell label="Messages">
            <Svg><path d="M1 2H13V12H1Z" fill="#eadfa2" /><path d="M2 4L7 8L12 4" stroke="#b39a43" /></Svg>
        </Cell>
    </footer>
);

export default function App() {
    const [tab, setTab] = useState('Home');

    return (
        <div className="relative flex h-screen flex-col overflow-hidden bg-[#34404a] font-['Noto_Sans','Open_Sans',sans-serif] text-[#e8ebed]">
            <Header tab={tab} setTab={setTab} />
            <Ribbon />
            <DocumentTabs />
            <Canvas />
            <LayoutTabs />
            <CommandLine />
            <StatusBar />

            {/* mouse pointer */}
            <Svg w={10} h={15} className="pointer-events-none absolute left-[768px] top-[57px]">
                <path d="M1 0L9 9L6 10L8 14L6 15L4 11L1 13Z" fill="#fff" />
            </Svg>
        </div>
    );
}
